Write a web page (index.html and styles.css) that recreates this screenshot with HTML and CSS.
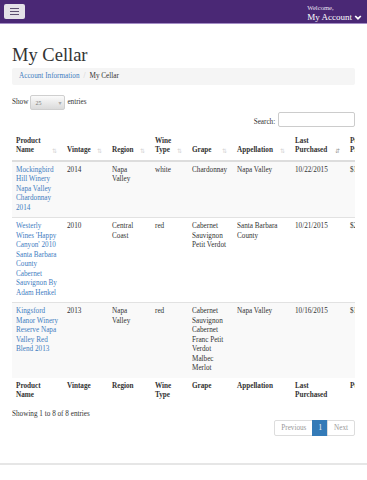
FILE: index.html
```html
<!DOCTYPE html>
<html lang="en">
<head>
  <meta charset="UTF-8">
  <meta name="viewport" content="width=device-width, initial-scale=1.0">
  <title>My Cellar</title>
  <link rel="stylesheet" href="styles.css">
</head>
<body>

<header class="navbar">
  <button class="nav-toggle" type="button"><span></span><span></span><span></span></button>
  <div class="account">
    <div class="welcome">Welcome,</div>
    <div class="my-account">My Account
      <svg class="chevron" viewBox="0 0 8 6" width="8" height="6"><path d="M0.6 1.6 L1.8 0.4 L4 2.6 L6.2 0.4 L7.4 1.6 L4 5 Z" fill="#fff"/></svg>
    </div>
  </div>
</header>

<main class="page">
  <h1>My Cellar</h1>

  <ol class="breadcrumb">
    <li><a href="#">Account Information</a></li>
    <li class="active">My Cellar</li>
  </ol>

  <div class="length">
    Show
    <span class="select-wrap">
      <select>
        <option>25</option>
        <option>50</option>
        <option>100</option>
      </select>
    </span>
    entries
  </div>

  <div class="filter">
    <label>Search: <input type="search"></label>
  </div>

  <div class="table-wrap">
    <table class="cellar">
      <colgroup>
        <col class="c-name">
        <col class="c-vintage">
        <col class="c-region">
        <col class="c-type">
        <col class="c-grape">
        <col class="c-app">
        <col class="c-date">
        <col class="c-price">
      </colgroup>
      <thead>
        <tr>
          <th class="sorting">Product Name</th>
          <th class="sorting">Vintage</th>
          <th class="sorting">Region</th>
          <th class="sorting">Wine Type</th>
          <th class="sorting">Grape</th>
          <th class="sorting">Appellation</th>
          <th class="sorting sorted">Last Purchased</th>
          <th class="sorting">Purchase Price</th>
        </tr>
      </thead>
      <tbody>
        <tr>
          <td><a href="#">Mockingbird Hill Winery Napa Valley Chardonnay 2014</a></td>
          <td>2014</td>
          <td>Napa Valley</td>
          <td>white</td>
          <td>Chardonnay</td>
          <td>Napa Valley</td>
          <td>10/22/2015</td>
          <td>$18.99</td>
        </tr>
        <tr>
          <td><a href="#">Westerly Wines 'Happy Canyon' 2010 Santa Barbara County Cabernet Sauvignon By Adam Henkel</a></td>
          <td>2010</td>
          <td>Central Coast</td>
          <td>red</td>
          <td>Cabernet Sauvignon Petit Verdot</td>
          <td>Santa Barbara County</td>
          <td>10/21/2015</td>
          <td>$24.99</td>
        </tr>
        <tr>
          <td><a href="#">Kingsford Manor Winery Reserve Napa Valley Red Blend 2013</a></td>
          <td>2013</td>
          <td>Napa Valley</td>
          <td>red</td>
          <td>Cabernet Sauvignon Cabernet Franc Petit Verdot Malbec Merlot</td>
          <td>Napa Valley</td>
          <td>10/16/2015</td>
          <td>$19.99</td>
        </tr>
      </tbody>
      <tfoot>
        <tr>
          <th>Product Name</th>
          <th>Vintage</th>
          <th>Region</th>
          <th>Wine Type</th>
          <th>Grape</th>
          <th>Appellation</th>
          <th>Last Purchased</th>
          <th>Purchase Price</th>
        </tr>
      </tfoot>
    </table>
  </div>

  <div class="info">Showing 1 to 8 of 8 entries</div>

  <ul class="pagination">
    <li class="disabled"><a href="#">Previous</a></li>
    <li class="active"><a href="#">1</a></li>
    <li class="disabled"><a href="#">Next</a></li>
  </ul>
</main>

<footer class="site-footer"></footer>

</body>
</html>
```

FILE: styles.css
```css
body {
  margin: 0;
  font-family: "Liberation Serif", serif;
  font-size: 7.2px;
  line-height: 9.5px;
  color: #333;
  background-color: #fff;
}
a {
  color: #3f7dbf;
  text-decoration: none;
}

/* top bar */
.navbar {
  height: 23px;
  background-color: #4a2875;
  border-bottom: 1px solid #a38cc6;
  display: flex;
  justify-content: space-between;
  align-items: flex-start;
  padding: 0 5px 0 4px;
}
.nav-toggle {
  margin-top: 4px;
  width: 21px;
  height: 15px;
  padding: 0;
  border: none;
  border-radius: 2px;
  background-color: #e4e1e8;
  display: flex;
  flex-direction: column;
  justify-content: center;
  align-items: center;
  gap: 2px;
}
.nav-toggle span {
  display: block;
  width: 9px;
  height: 1px;
  background-color: #5d4f70;
}
.account {
  padding-top: 4px;
  color: #fff;
}
.welcome {
  font-size: 6.6px;
  line-height: 8px;
  color: #e9e1f2;
}
.my-account {
  font-size: 9px;
  line-height: 11px;
  display: flex;
  align-items: center;
  gap: 2px;
}

/* content */
.page {
  padding: 0 12px;
}
h1 {
  font-size: 18.5px;
  line-height: 21px;
  font-weight: normal;
  margin: 21px 0 2px;
  color: #333;
}
.breadcrumb {
  list-style: none;
  margin: 0;
  padding: 4px 7px;
  line-height: 9px;
  background-color: #f5f5f5;
  border-radius: 2px;
  display: flex;
}
.breadcrumb li + li:before {
  content: "/";
  padding: 0 4px;
  color: #ccc;
}
.breadcrumb .active {
  color: #333;
}

.length {
  margin-top: 10px;
  height: 15px;
  display: flex;
  align-items: center;
  gap: 2px;
}
.select-wrap {
  position: relative;
  display: inline-block;
}
.select-wrap select {
  appearance: none;
  -webkit-appearance: none;
  width: 35px;
  height: 15px;
  padding: 0 0 0 4px;
  border: 1px solid #cfcfcf;
  border-radius: 2px;
  background: linear-gradient(#fbfbfb, #dadada);
  font-family: "Liberation Serif", serif;
  font-size: 6px;
  color: #777;
}
.select-wrap:after {
  content: "\25BE";
  position: absolute;
  right: 4px;
  top: 3px;
  font-family: "DejaVu Sans", sans-serif;
  font-size: 6px;
  line-height: 9px;
  color: #aaa;
}

.filter {
  margin-top: 2px;
  display: flex;
  justify-content: flex-end;
}
.filter input {
  width: 77px;
  height: 15px;
  box-sizing: border-box;
  margin: 0 0 0 1px;
  border: 1px solid #ccc;
  border-radius: 2px;
  padding: 0 3px;
}

/* table */
.table-wrap {
  margin-top: 5px;
  overflow: hidden;
}
.cellar {
  width: 394px;
  table-layout: fixed;
  border-collapse: collapse;
}
.c-name { width: 51px; }
.c-vintage { width: 45px; }
.c-region { width: 43px; }
.c-type { width: 37px; }
.c-grape { width: 45px; }
.c-app { width: 58px; }
.c-date { width: 55px; }
.c-price { width: 60px; }

.cellar th,
.cellar td {
  padding: 4px;
  text-align: left;
  vertical-align: top;
}
.cellar th {
  font-weight: bold;
}
.cellar thead th {
  vertical-align: bottom;
  border-bottom: 2px solid #ddd;
  padding-right: 14px;
  position: relative;
}
.cellar thead th.sorting:after {
  content: "\21C5";
  position: absolute;
  right: 6px;
  bottom: 4px;
  font-family: "DejaVu Sans", sans-serif;
  font-weight: normal;
  font-size: 6px;
  color: #d4d4d4;
}
.cellar thead th.sorted:after {
  content: "\21F5";
  color: #999;
}
.cellar tbody td {
  border-top: 1px solid #e2e2e2;
}
.cellar tbody tr:nth-child(odd) {
  background-color: #f9f9f9;
}
.cellar tbody tr:first-child td {
  border-top: none;
}

.info {
  margin-top: 5px;
}

.pagination {
  list-style: none;
  margin: 1px 0 0;
  padding: 0;
  display: flex;
  justify-content: flex-end;
}
.pagination a {
  display: block;
  height: 16px;
  box-sizing: border-box;
  line-height: 14px;
  padding: 0 6px;
  border: 1px solid #ddd;
  margin-left: -1px;
  background-color: #fff;
}
.pagination li:first-child a {
  border-radius: 2px 0 0 2px;
}
.pagination li:last-child a {
  border-radius: 0 2px 2px 0;
}
.pagination .disabled a {
  color: #999;
}
.pagination .active a {
  background-color: #337ab7;
  border-color: #337ab7;
  color: #fff;
  padding: 0 5px;
}

.site-footer {
  margin-top: 27px;
  border-top: 2px solid #e6e6e6;
  height: 15px;
}
```
